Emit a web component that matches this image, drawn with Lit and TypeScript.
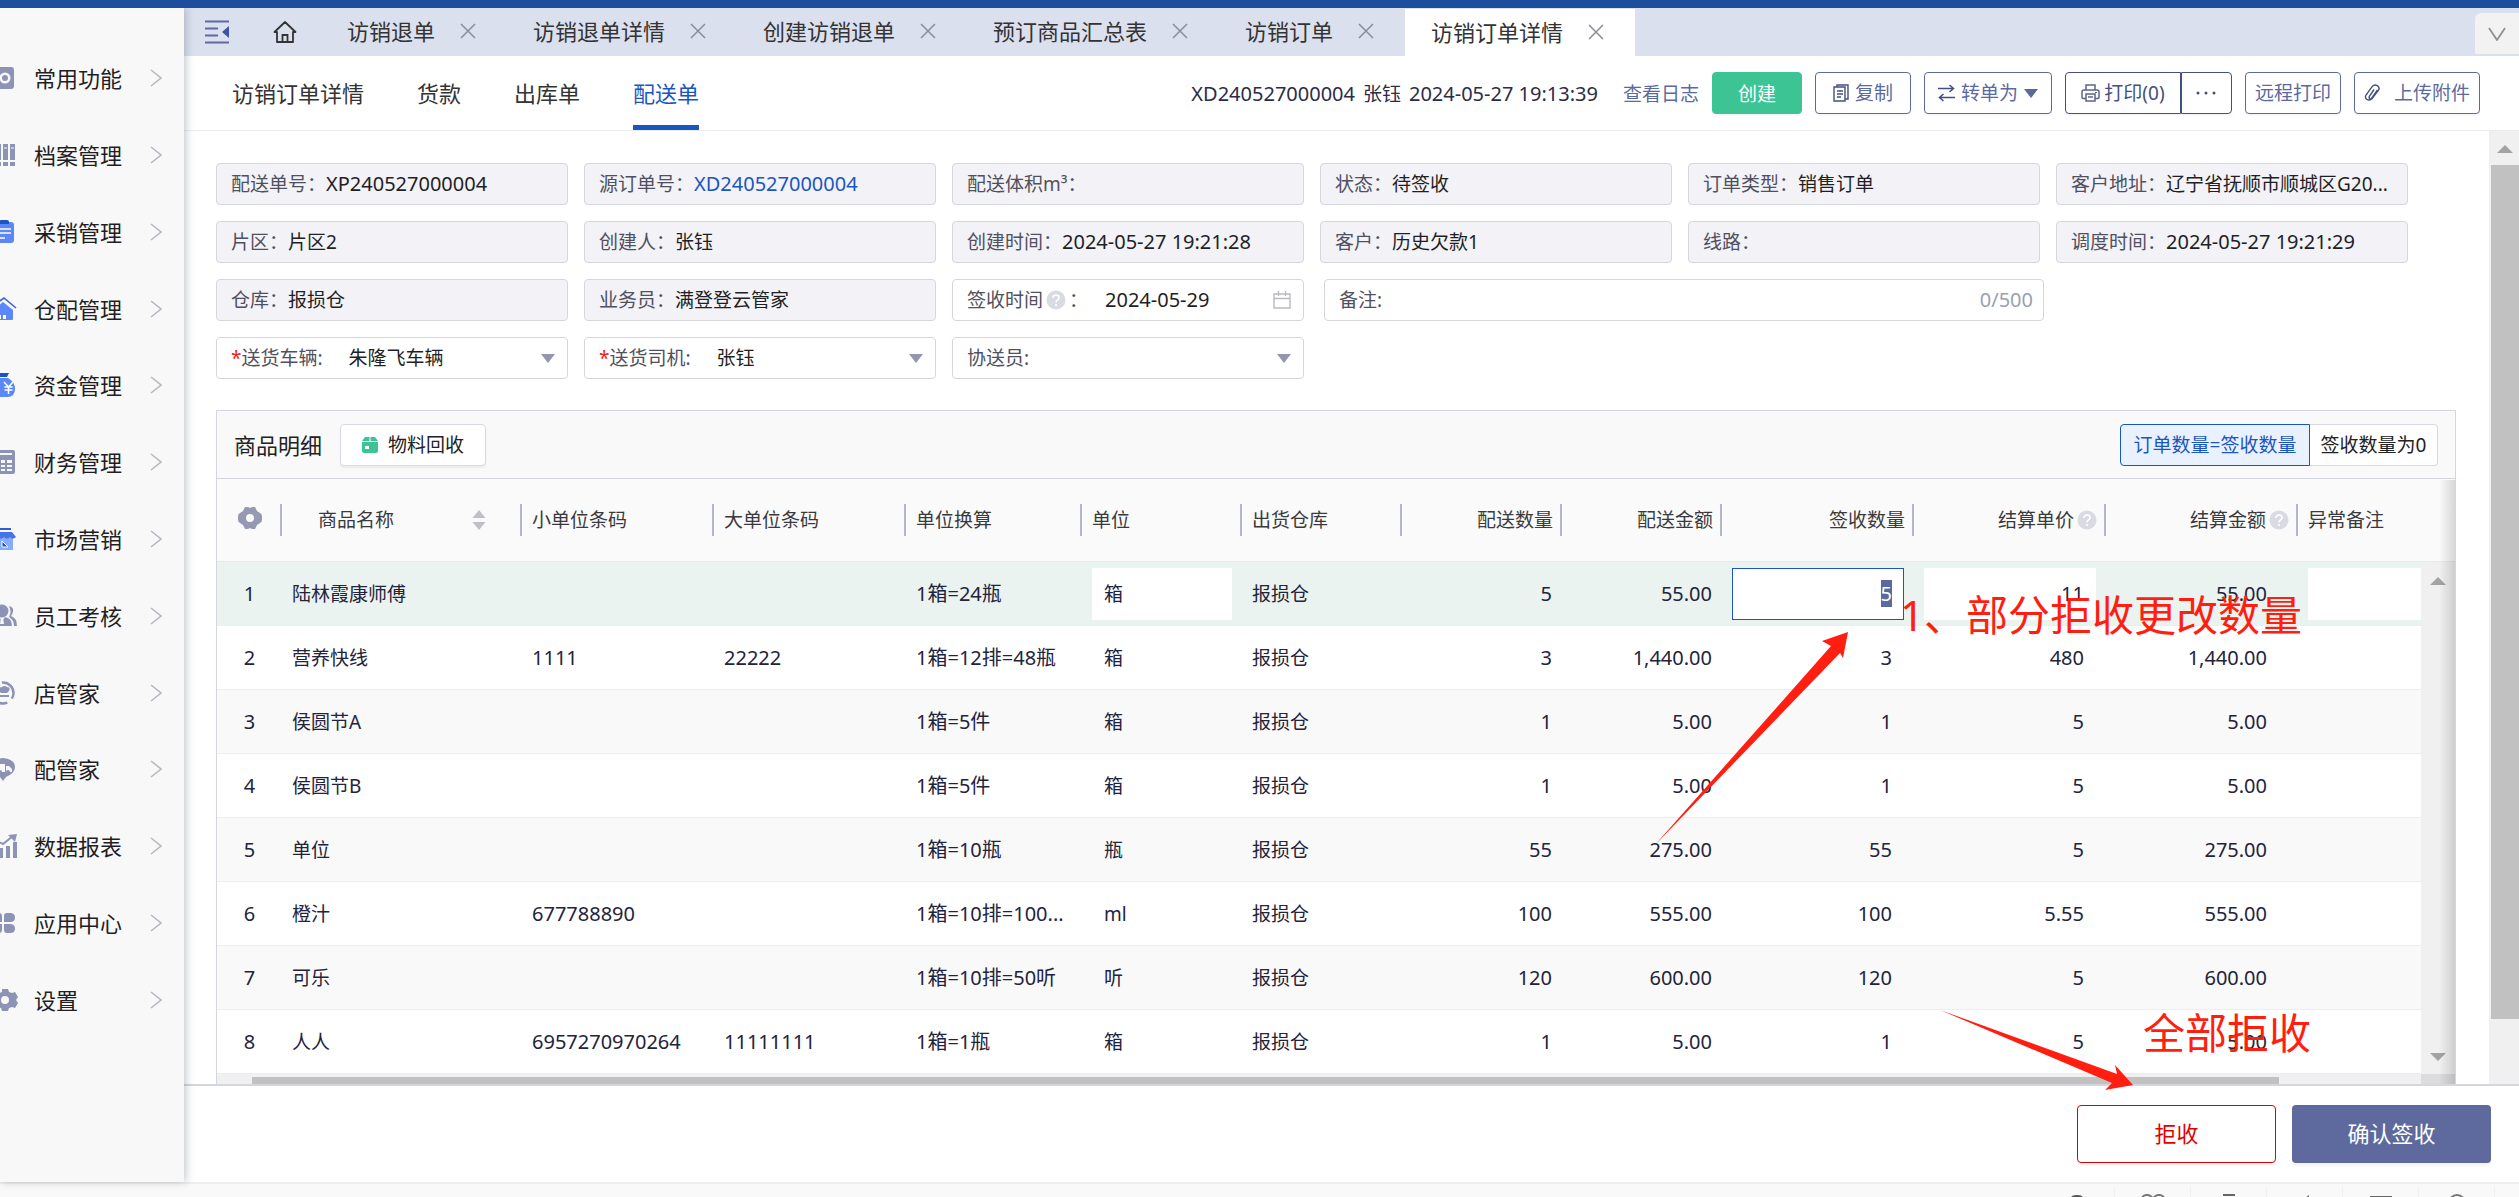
import { LitElement, html, css, svg, nothing } from "lit";
import { customElement, query } from "lit/decorators.js";
import { classMap } from "lit/directives/class-map.js";

type Tone = "gray" | "blue";

interface Row {
  name: string;
  small: string;
  large: string;
  conv: string;
  unit: string;
  qty: string;
  amount: string;
  signed: string;
  price: string;
  total: string;
}

const MENU: { label: string; tone: Tone; icon: unknown }[] = [
  {
    label: "常用功能",
    tone: "gray",
    icon: svg`<path fill-rule="evenodd" d="M3 1h18q3 0 3 3v16q0 3-3 3H7L0 18V4q0-3 3-3zM15 6.500a5.500 5.500 0 1 0 0 11 5.500 5.500 0 0 0 0-11zM15 9a3 3 0 1 1 0 6 3 3 0 0 1 0-6z"/>`,
  },
  {
    label: "档案管理",
    tone: "gray",
    icon: svg`<path d="M1 1h4v16H1zM1 19h4v4H1zM7 1h4v16H7zM7 19h4v4H7zM13 1h5v16h-5zM13 19h5v4h-5zM20 1h5v16h-5zM20 19h5v4h-5z"/><path d="M14 5h3M21 5h3M8 5h2" stroke="#f8f8f8"/>`,
  },
  {
    label: "采销管理",
    tone: "blue",
    icon: svg`<rect x="2" y="2" width="22" height="21" rx="3"/><path d="M9 4V2q0-2 2-2h6q2 0 2 2v2z" fill="#1b56c0"/><path d="M7 9h14M7 13h14M7 18h8" stroke="#fff" stroke-width="1.500"/>`,
  },
  {
    label: "仓配管理",
    tone: "blue",
    icon: svg`<path d="M3 13 13 5l10 8v9q0 1-1 1H4q-1 0-1-1z"/><path d="M0 11 14 1l12 10" fill="none" stroke="#3a63d8" stroke-width="1.600"/><path d="M8 18h3v4H8zM13 18h3v4h-3z" fill="#fff"/>`,
  },
  {
    label: "资金管理",
    tone: "blue",
    icon: svg`<path d="M7 0h12l-2 4H9z" fill="#1b56c0"/><path d="M8 5h10q7 4 7 11t-7 8H7q-6-2-6-8T8 5z"/><path d="m14 9 4.500 5L23 9M18.500 14v7M14.500 14h8M14.500 17h8" fill="none" stroke="#fff" stroke-width="1.500"/>`,
  },
  {
    label: "财务管理",
    tone: "gray",
    icon: svg`<rect x="1" y="0" width="24" height="24" rx="2"/><path d="M4 4h18" stroke="#f8f8f8" stroke-width="2"/><path d="M5 10h4v3H5zM11 10h4v3h-4zM17 10h5v3h-5zM5 15h4v2H5zM11 15h4v2h-4zM17 15h5v2h-5zM5 19h4v2H5zM11 19h4v2h-4zM17 19h5v2h-5z" fill="#f8f8f8"/>`,
  },
  {
    label: "市场营销",
    tone: "blue",
    icon: svg`<path d="M3 9h20v14H3z" fill="#86abff"/><path d="M3 1h18v2H3z" fill="#2f5fd8"/><path d="M3 5h19l4 5q-3 3-6 0-3 3-6 0-3 3-6 0-3 3-6 0z" fill="#4674e8"/><path d="m12 14 6 6h-6z" fill="#1b56c0" stroke="#fff"/>`,
  },
  {
    label: "员工考核",
    tone: "gray",
    icon: svg`<circle cx="12" cy="7" r="6.500"/><path d="M1 22q1-8 8-9l3 4 3-4q7 1 7 9z"/><path d="M19 2q5 1 4 6-1 3-2 4 6 2 6 10h-3q0-6-5-9 3-5 0-11z"/><path d="M11 14h2l1 6h-4z" fill="#f8f8f8"/>`,
  },
  {
    label: "店管家",
    tone: "gray",
    icon: svg`<circle cx="13" cy="12" r="10.500" fill="none" stroke="currentColor" stroke-width="2.500" stroke-dasharray="24 6 30 6" stroke-dashoffset="18"/><path d="M9 10q-1-4 3-4 2-2 5 0 4 0 2 4l-2 2h-6zM9 14h10v2H9z"/>`,
  },
  {
    label: "配管家",
    tone: "gray",
    icon: svg`<path d="M13 1q12 1 12 9 0 6-9 10l-3 4-3-4q-9-4-9-10 0-8 12-9z"/><path d="M5 7h10v8H5zM16 9h3l3 3v3h-6z" fill="#f8f8f8"/><circle cx="10" cy="15" r="2"/><circle cx="18" cy="15" r="2"/>`,
  },
  {
    label: "数据报表",
    tone: "gray",
    icon: svg`<path d="M2 17h4v7H2zM9 14h4v10H9zM16 12h4v12h-4zM23 8h4v16h-4z"/><path d="m1 12 6-5 6 3 10-8" fill="none" stroke="currentColor" stroke-width="2"/><path d="m18 1 9-1-2 8z"/>`,
  },
  {
    label: "应用中心",
    tone: "gray",
    icon: svg`<path d="M5 2h4q3 0 3 3v6H6q-4 0-4-4.500T5 2zM20 2q5 0 5 4.500T20 11h-6V5q0-3 3-3zM5 13h7v6q0 3-3 3H6q-4 0-4-4.500T5 13zM14 13h6q5 0 5 4.500T20 22h-3q-3 0-3-3z"/>`,
  },
  {
    label: "设置",
    tone: "gray",
    icon: svg`<path fill-rule="evenodd" d="M12 1h6l1 3 3 1 3-1 3 5-2 3 2 3-3 5-3-1-3 1-1 3h-6l-1-3-3-1-3 1-2-5 2-3-2-3 3-5 3 1 3-1zM15 8a4 4 0 1 0 0 8 4 4 0 0 0 0-8z"/>`,
  },
];

const TABS = ["访销退单", "访销退单详情", "创建访销退单", "预订商品汇总表", "访销订单", "访销订单详情"];

const INFO: { label: string; value: string; num?: boolean; link?: boolean }[] = [
  { label: "配送单号", value: "XP240527000004", num: true },
  { label: "源订单号", value: "XD240527000004", num: true, link: true },
  { label: "配送体积m³", value: "" },
  { label: "状态", value: "待签收" },
  { label: "订单类型", value: "销售订单" },
  { label: "客户地址", value: "辽宁省抚顺市顺城区G20..." },
  { label: "片区", value: "片区2" },
  { label: "创建人", value: "张钰" },
  { label: "创建时间", value: "2024-05-27 19:21:28", num: true },
  { label: "客户", value: "历史欠款1" },
  { label: "线路", value: "" },
  { label: "调度时间", value: "2024-05-27 19:21:29", num: true },
  { label: "仓库", value: "报损仓" },
  { label: "业务员", value: "满登登云管家" },
];

const row = (...v: string[]): Row => ({
  name: v[0], small: v[1], large: v[2], conv: v[3], unit: v[4],
  qty: v[5], amount: v[6], signed: v[7], price: v[8], total: v[9],
});

const ROWS: Row[] = [
  row("陆林霞康师傅", "", "", "1箱=24瓶", "箱", "5", "55.00", "5", "11", "55.00"),
  row("营养快线", "1111", "22222", "1箱=12排=48瓶", "箱", "3", "1,440.00", "3", "480", "1,440.00"),
  row("侯圆节A", "", "", "1箱=5件", "箱", "1", "5.00", "1", "5", "5.00"),
  row("侯圆节B", "", "", "1箱=5件", "箱", "1", "5.00", "1", "5", "5.00"),
  row("单位", "", "", "1箱=10瓶", "瓶", "55", "275.00", "55", "5", "275.00"),
  row("橙汁", "677788890", "", "1箱=10排=100...", "ml", "100", "555.00", "100", "5.55", "555.00"),
  row("可乐", "", "", "1箱=10排=50听", "听", "120", "600.00", "120", "5", "600.00"),
  row("人人", "6957270970264", "11111111", "1箱=1瓶", "箱", "1", "5.00", "1", "5", "5.00"),
];

const base = css`
  * {
    box-sizing: border-box;
  }
  button,
  input,
  select {
    font: inherit;
    color: inherit;
    margin: 0;
    padding: 0;
    border: 0;
    border-radius: 0;
    background: none;
    outline: none;
    appearance: none;
    min-width: 0;
  }
  a {
    color: inherit;
    text-decoration: none;
  }
  svg {
    display: block;
    flex: none;
  }
`;

const help = html`<svg width="20" height="20" viewBox="0 0 20 20" aria-hidden="true">
  <circle cx="10" cy="10" r="9.500" fill="#d9dbe3" />
  <path d="M7 8q0-3 3-3t3 2.600q0 1.400-1.500 2.400T10 12.500" fill="none" stroke="#fff" stroke-width="1.600" />
  <circle cx="10" cy="15" r="1.100" fill="#fff" />
</svg>`;

const caret = (color: string) => html`<svg width="14" height="9" viewBox="0 0 14 9" aria-hidden="true">
  <path d="M0 0h14L7 9z" fill=${color} />
</svg>`;

@customElement("side-menu")
class SideMenu extends LitElement {
  static styles = [
    base,
    css`
      :host {
        display: block;
        position: relative;
        z-index: 2;
        flex: none;
        width: 184px;
        background: #f8f8f8;
        box-shadow: 2px 0 8px rgba(60, 75, 90, 0.3);
      }
      .menu {
        display: flex;
        flex-direction: column;
        height: 100%;
        padding: 32px 0 144px;
      }
      .item {
        flex: 1;
        display: flex;
        align-items: center;
        padding-right: 22px;
        color: #1e1e24;
        font-size: 22px;
        line-height: 32px;
      }
      .icon {
        margin-left: -10px;
        margin-right: 16px;
        overflow: visible;
      }
      .gray {
        fill: #8d93b4;
        color: #8d93b4;
      }
      .blue {
        fill: #5b87f8;
      }
      .label {
        flex: 1;
      }
    `,
  ];

  render() {
    return html`<nav class="menu">
      ${MENU.map(
        (m) => html`<a class="item" href="#">
          <svg class="icon ${m.tone}" width="28" height="24" viewBox="0 0 28 24" aria-hidden="true">${m.icon}</svg>
          <span class="label">${m.label}</span>
          <svg width="12" height="18" viewBox="0 0 12 18" aria-hidden="true">
            <path d="m1 1 10 8L1 17" fill="none" stroke="#b4b7c0" stroke-width="1.500" />
          </svg>
        </a>`
      )}
    </nav>`;
  }
}

@customElement("tab-strip")
class TabStrip extends LitElement {
  static styles = [
    base,
    css`
      :host {
        display: flex;
        flex: none;
        height: 48px;
        padding-left: 20px;
        background: #dbe0ee;
        color: #333;
        font-size: 22px;
        line-height: 32px;
      }
      .tool {
        display: flex;
        align-items: center;
        justify-content: center;
      }
      .fold {
        width: 26px;
      }
      .home {
        width: 26px;
        margin: 0 23px 0 42px;
      }
      .tab {
        display: flex;
        align-items: center;
        gap: 25px;
        padding: 0 31px 2px 26px;
        white-space: nowrap;
      }
      .active {
        margin-top: 1px;
        background: #fff;
      }
      .more {
        width: 44px;
        margin: 5px 0 2px auto;
        border-radius: 6px 0 0 0;
        background: #f2f2f2;
      }
    `,
  ];

  render() {
    return html`
      <button class="tool fold" aria-label="收起菜单">
        <svg width="26" height="24" viewBox="0 0 26 24" aria-hidden="true">
          <path d="M1 1.500h24M1 8.500h13M1 15.500h13M1 22.500h24" stroke="#5d6aa0" stroke-width="2" />
          <path d="M25 6v12l-7-6z" fill="#3d55a5" />
        </svg>
      </button>
      <button class="tool home" aria-label="首页">
        <svg width="24" height="24" viewBox="0 0 24 24" aria-hidden="true">
          <path d="M1.500 12 12 2l10.500 10H20v10H4V12z" fill="none" stroke="#333" stroke-width="1.800" stroke-linejoin="round" />
          <path d="M9.500 22v-7h5v7" fill="none" stroke="#333" stroke-width="1.800" />
        </svg>
      </button>
      ${TABS.map(
        (t, i) => html`<div class=${classMap({ tab: true, active: i === TABS.length - 1 })}>
          <a href="#">${t}</a>
          <button aria-label="关闭">
            <svg width="16" height="16" viewBox="0 0 16 16" aria-hidden="true">
              <path d="m1 1 14 14M15 1 1 15" stroke="#8a8d96" stroke-width="1.500" />
            </svg>
          </button>
        </div>`
      )}
      <button class="tool more" aria-label="更多标签">
        <svg width="18" height="14" viewBox="0 0 18 14" aria-hidden="true">
          <path d="m1 1 8 12 8-12" fill="none" stroke="#8f8f94" stroke-width="1.800" />
        </svg>
      </button>
    `;
  }
}

@customElement("order-header")
class OrderHeader extends LitElement {
  static styles = [
    base,
    css`
      :host {
        display: flex;
        flex: none;
        justify-content: space-between;
        height: 75px;
        padding: 0 39px 0 48px;
        border-bottom: 1px solid #e9ebee;
        white-space: nowrap;
      }
      .views {
        display: flex;
        gap: 53px;
        font-size: 22px;
        line-height: 32px;
        color: #333;
      }
      .view {
        padding-top: 21px;
      }
      .current {
        border-bottom: 5px solid #1b56c0;
        color: #1b56c0;
      }
      .actions {
        display: flex;
        align-items: center;
        gap: 13px;
        font-size: 19px;
        line-height: 28px;
        color: #5b6a9e;
      }
      .stamp {
        display: flex;
        gap: 8px;
        margin-right: 12px;
        color: #2c2c48;
      }
      .stamp,
      .log {
        padding-top: 2px;
      }
      .num {
        font-size: 20px;
      }
      .btn {
        display: flex;
        align-items: center;
        justify-content: center;
        height: 42px;
        border: 1px solid #5b6a9e;
        border-radius: 4px;
        gap: 6px;
        padding: 0 9px;
        box-shadow: 0 2px 1px rgba(0, 0, 0, 0.03);
      }
      .create {
        width: 90px;
        padding-top: 2px;
        border-color: #3cc495;
        background: #3cc495;
        color: #fff;
      }
      .copy {
        width: 96px;
      }
      .turn {
        width: 128px;
      }
      .group {
        display: flex;
        color: #434f80;
      }
      .print {
        width: 116px;
        gap: 4px;
        border-color: #434f80;
        border-radius: 4px 0 0 4px;
      }
      .dots {
        width: 51px;
        border-color: #434f80;
        border-radius: 0 4px 4px 0;
      }
      .upload {
        gap: 14px;
      }
    `,
  ];

  render() {
    return html`
      <nav class="views">
        <a class="view" href="#">访销订单详情</a>
        <a class="view" href="#">货款</a>
        <a class="view" href="#">出库单</a>
        <a class="view current" href="#">配送单</a>
      </nav>
      <div class="actions">
        <div class="stamp">
          <span class="num">XD240527000004</span><span>张钰</span><span class="num">2024-05-27 19:13:39</span>
        </div>
        <a class="log" href="#">查看日志</a>
        <button class="btn create">创建</button>
        <button class="btn copy">
          <svg width="16" height="18" viewBox="0 0 16 18" aria-hidden="true">
            <path d="M4 3V1h11v14h-3M1 3h11v14H1zM4 7h6M4 10h6M4 13h4" fill="none" stroke="#434f80" stroke-width="1.400" />
          </svg>
          复制
        </button>
        <button class="btn turn">
          <svg width="17" height="18" viewBox="0 0 17 18" aria-hidden="true">
            <path d="M0 4.500h15M11.500 1l4 3.500-4 3.500M17 13.500H2M5.500 10l-4 3.500 4 3.500" fill="none" stroke="#434f80" stroke-width="1.500" />
          </svg>
          转单为 ${caret("#5b6a9e")}
        </button>
        <div class="group">
          <button class="btn print">
            <svg width="19" height="18" viewBox="0 0 19 18" aria-hidden="true">
              <path d="M5 6V1h9v5M4.500 14.500H2q-1 0-1-1V8q0-2 2-2h13q2 0 2 2v5.500q0 1-1 1h-2.500M5 10h9v7H5zM7 13h5" fill="none" stroke="#5b6588" stroke-width="1.500" />
              <path d="M14 8.500h2" stroke="#5b6588" />
            </svg>
            <span>打印(0)</span>
          </button>
          <button class="btn dots" aria-label="更多">
            <svg width="20" height="4" viewBox="0 0 20 4" aria-hidden="true">
              <circle cx="2" cy="2" r="1.500" fill="#434f80" />
              <circle cx="10" cy="2" r="1.500" fill="#434f80" />
              <circle cx="18" cy="2" r="1.500" fill="#434f80" />
            </svg>
          </button>
        </div>
        <button class="btn">远程打印</button>
        <button class="btn upload">
          <svg width="16" height="18" viewBox="0 0 16 18" aria-hidden="true">
            <path d="m13.500 6-6 8.500q-2 2.500-4.500 1t-1-4.500l6.500-8.800q2-2.200 4.800-.6t1.200 4.600l-6.200 8.200q-1.300 1.200-2.500.3t-.3-2.500L10 5.500" fill="none" stroke="#434f80" stroke-width="1.400" />
          </svg>
          上传附件
        </button>
      </div>
    `;
  }
}

@customElement("delivery-form")
class DeliveryForm extends LitElement {
  static styles = [
    base,
    css`
      :host {
        display: grid;
        grid-template-columns: repeat(6, minmax(0, 1fr));
        gap: 16px;
        padding-right: 48px;
        font-size: 19px;
        line-height: 28px;
        color: #1f1f24;
        white-space: nowrap;
      }
      .field {
        display: flex;
        align-items: center;
        height: 42px;
        padding: 0 12px 0 14px;
        border: 1px solid #d5d7e0;
        border-radius: 4px;
        background: #f2f2f7;
      }
      .open {
        background: #fff;
      }
      .label {
        color: #50505f;
        flex: none;
      }
      .num {
        font-size: 20px;
      }
      .link {
        color: #1b56c0;
      }
      .req {
        color: #f02020;
      }
      .control {
        flex: 1;
      }
      .pick {
        margin-left: 26px;
      }
      .hint {
        display: flex;
        align-items: center;
        gap: 3px;
      }
      .date {
        margin-left: 17px;
      }
      .remark {
        grid-column: span 2;
        margin: 0 -4px 0 4px;
        padding-right: 10px;
      }
      .count {
        color: #9c9fb0;
        font-size: 20px;
      }
    `,
  ];

  private pick(id: string, label: string, value: string, required: boolean) {
    return html`<div class="field open">
      <label class="label" for=${id}>${required ? html`<span class="req">*</span>` : nothing}${label}:</label>
      <select id=${id} class="control pick">
        <option>${value}</option>
      </select>
      ${caret("#9296ae")}
    </div>`;
  }

  render() {
    return html`
      ${INFO.map(
        (f) => html`<div class="field">
          <span class="label">${f.label}：</span>
          ${f.link
            ? html`<a class="num link" href="#">${f.value}</a>`
            : html`<span class=${classMap({ num: !!f.num })}>${f.value}</span>`}
        </div>`
      )}
      <div class="field open">
        <label class="label hint" for="sign-date">签收时间 ${help} ：</label>
        <input id="sign-date" class="control date num" value="2024-05-29" />
        <svg width="18" height="18" viewBox="0 0 18 18" aria-hidden="true">
          <path d="M1 3h16v14H1zM1 7.500h16M5.500 0v5M12.500 0v5" fill="none" stroke="#b9bbc2" stroke-width="1.400" />
        </svg>
      </div>
      <div class="field open remark">
        <label class="label" for="remark">备注:</label>
        <input id="remark" class="control" />
        <span class="count">0/500</span>
      </div>
      <span></span>
      ${this.pick("truck", "送货车辆", "朱隆飞车辆", true)} ${this.pick("driver", "送货司机", "张钰", true)}
      ${this.pick("helper", "协送员", "", false)}
    `;
  }
}

@customElement("goods-panel")
class GoodsPanel extends LitElement {
  @query(".focus") private focusInput!: HTMLInputElement;

  static styles = [
    base,
    css`
      :host {
        display: block;
        position: relative;
        border: 1px solid #d3d6e0;
        color: #23233c;
        font-size: 19px;
        line-height: 28px;
        white-space: nowrap;
      }
      .bar {
        display: flex;
        align-items: center;
        height: 68px;
        padding: 0 17px;
        border-bottom: 1px solid #d3d6e0;
        background: #f9f9f9;
      }
      .title {
        margin: 0 18px 0 0;
        font-size: 22px;
        font-weight: 400;
        line-height: 32px;
        color: #222;
      }
      .btn {
        display: flex;
        align-items: center;
        justify-content: center;
        gap: 10px;
        height: 42px;
        border: 1px solid #d8dae2;
        border-radius: 4px;
        background: #fff;
        color: #222;
      }
      .recycle {
        width: 146px;
        box-shadow: 0 2px 2px rgba(0, 0, 0, 0.05);
      }
      .split {
        display: flex;
        margin-left: auto;
      }
      .on {
        width: 190px;
        border-color: #1b56c0;
        border-radius: 4px 0 0 4px;
        background: #eaf1fe;
        color: #1b56c0;
      }
      .off {
        width: 128px;
        border-left: 0;
        border-radius: 0 4px 4px 0;
      }
      .table {
        width: 100%;
        table-layout: fixed;
        border-collapse: separate;
        border-spacing: 0;
      }
      .w65 {
        width: 65px;
      }
      .w160 {
        width: 160px;
      }
      .w176 {
        width: 176px;
      }
      .w192 {
        width: 192px;
      }
      .w240 {
        width: 240px;
      }
      th {
        height: 83px;
        padding: 0 9px 0 10px;
        border-bottom: 1px solid #e6e7ea;
        background: #fafafa linear-gradient(#b4b7ca, #b4b7ca) right center / 2px 32px no-repeat;
        font-weight: 400;
        color: #3a3a3e;
        text-align: left;
      }
      th:last-child {
        background: #fafafa;
      }
      td {
        height: 64px;
        padding: 0 10px;
        border-bottom: 1px solid #ededf0;
        overflow: hidden;
      }
      .right {
        text-align: right;
      }
      .inline {
        display: flex;
        align-items: center;
        justify-content: flex-end;
        gap: 3px;
      }
      .sort {
        display: flex;
        align-items: center;
        justify-content: space-between;
        padding: 0 27px 0 26px;
      }
      .idx {
        padding: 0;
        text-align: center;
      }
      .gear {
        margin: 0 auto 4px;
      }
      .num {
        font-size: 20px;
      }
      .total {
        padding-right: 31px;
      }
      tbody tr:nth-child(odd) {
        background: #f9f9f9;
      }
      tbody tr.picked:first-child {
        background: #eaf3f0;
      }
      .cell {
        display: block;
        width: 100%;
        height: 52px;
        padding: 0 12px;
      }
      .picked .cell {
        background: #fff;
      }
      .picked .focus {
        border: 1px solid #1b56c0;
        padding: 0 11px;
      }
      .focus::selection {
        background: #5b6a9e;
        color: #fff;
      }
      .vbar {
        position: absolute;
        top: 151px;
        right: 0;
        bottom: 30px;
        width: 34px;
        display: flex;
        flex-direction: column;
        justify-content: space-between;
        align-items: center;
        padding: 15px 0 13px;
        background: #f0f0f0;
      }
      .shade {
        position: absolute;
        top: 69px;
        right: 0;
        bottom: 0;
        width: 16px;
        background: linear-gradient(to right, transparent, rgba(0, 0, 0, 0.14));
      }
      .hbar {
        display: flex;
        height: 30px;
        padding: 3px 0 3px 35px;
        background: linear-gradient(#dcdcdc, #dcdcdc) right / 34px 100% no-repeat #f0f0f0;
      }
      .thumb {
        width: 92%;
        background: #c1c1c1;
      }
    `,
  ];

  firstUpdated() {
    this.focusInput.focus({ preventScroll: true });
    this.focusInput.select();
  }

  render() {
    return html`
      <div class="bar">
        <h2 class="title">商品明细</h2>
        <button class="btn recycle">
          <svg width="16" height="16" viewBox="0 0 16 16" aria-hidden="true">
            <path d="M3 0h4.500v4H0zM8.500 0H13l3 4H8.500zM0 5h16v9q0 2-2 2H2q-2 0-2-2z" fill="#3cc495" />
            <path d="M3 9h4v3H3z" fill="#fff" />
          </svg>
          物料回收
        </button>
        <div class="split">
          <button class="btn on">订单数量=签收数量</button>
          <button class="btn off">签收数量为0</button>
        </div>
      </div>
      <table class="table">
        <colgroup>
          <col class="w65" />
          <col class="w240" />
          <col class="w192" />
          <col class="w192" />
          <col class="w176" />
          <col class="w160" />
          <col class="w160" />
          <col class="w160" />
          <col class="w160" />
          <col class="w192" />
          <col class="w192" />
          <col class="w192" />
          <col />
        </colgroup>
        <thead>
          <tr>
            <th class="idx">
              <svg class="gear" width="24" height="22" viewBox="0 0 24 22" aria-label="列设置">
                <path fill-rule="evenodd" fill="#9599b2" d="M7 0h3l2 1 2-1h3l2 4 3 2q2 1 2 3v4q0 2-2 3l-3 2-2 4h-3l-2-1-2 1H7l-2-4-3-2q-2-1-2-3V9q0-2 2-3l3-2zM12 7a4 4 0 1 0 0 8 4 4 0 0 0 0-8z" />
              </svg>
            </th>
            <th>
              <div class="sort">
                商品名称
                <svg width="14" height="20" viewBox="0 0 14 20" aria-hidden="true">
                  <path d="M7 0l6.500 8H.5zM7 20l6.500-8H.5z" fill="#bfc0c6" />
                </svg>
              </div>
            </th>
            <th>小单位条码</th>
            <th>大单位条码</th>
            <th>单位换算</th>
            <th>单位</th>
            <th>出货仓库</th>
            <th class="right">配送数量</th>
            <th class="right">配送金额</th>
            <th class="right">签收数量</th>
            <th><div class="inline">结算单价${help}</div></th>
            <th><div class="inline">结算金额${help}</div></th>
            <th>异常备注</th>
          </tr>
        </thead>
        <tbody>
          ${ROWS.map(
            (r, i) => html`<tr class=${classMap({ picked: i === 0 })}>
              <td class="idx num">${i + 1}</td>
              <td>${r.name}</td>
              <td class="num">${r.small}</td>
              <td class="num">${r.large}</td>
              <td class="num">${r.conv}</td>
              <td>
                <select class="cell" aria-label="单位">
                  <option>${r.unit}</option>
                </select>
              </td>
              <td>报损仓</td>
              <td class="right num">${r.qty}</td>
              <td class="right num">${r.amount}</td>
              <td>
                <input class=${classMap({ cell: true, right: true, num: true, focus: i === 0 })} aria-label="签收数量" .value=${r.signed} />
              </td>
              <td><input class="cell right num" aria-label="结算单价" .value=${r.price} /></td>
              <td class="right num total">${r.total}</td>
              <td><input class="cell" aria-label="异常备注" /></td>
            </tr>`
          )}
        </tbody>
      </table>
      <div class="hbar"><div class="thumb"></div></div>
      <div class="vbar">
        <svg width="16" height="8" viewBox="0 0 16 8" aria-hidden="true"><path d="M8 0l8 8H0z" fill="#a3a3a3" /></svg>
        <svg width="16" height="8" viewBox="0 0 16 8" aria-hidden="true"><path d="M8 8l8-8H0z" fill="#a3a3a3" /></svg>
      </div>
      <div class="shade"></div>
    `;
  }
}

@customElement("app-root")
class AppRoot extends LitElement {
  static styles = [
    base,
    css`
      :host {
        display: flex;
        flex-direction: column;
        position: relative;
        height: 100vh;
        overflow: hidden;
        border-top: 8px solid #1d4e9e;
        box-sizing: border-box;
        background: #fff;
        font-family: "Noto Sans", "Noto Sans CJK SC", sans-serif;
      }
      .body {
        flex: 1;
        display: flex;
        min-height: 0;
      }
      .main {
        flex: 1;
        display: flex;
        flex-direction: column;
        min-width: 0;
      }
      .scroller {
        flex: 1;
        display: flex;
        min-height: 0;
      }
      .content {
        flex: 1;
        display: flex;
        flex-direction: column;
        gap: 31px;
        min-width: 0;
        padding: 32px 33px 0 32px;
        overflow: hidden;
      }
      .content > * {
        flex: none;
      }
      .track {
        display: flex;
        flex-direction: column;
        align-items: center;
        gap: 12px;
        width: 30px;
        padding: 14px 0 0 2px;
        background: #f0f0f0;
      }
      .thumb {
        width: 100%;
        height: 91%;
        background: #c1c1c1;
      }
      .footer {
        display: flex;
        flex: none;
        justify-content: flex-end;
        gap: 16px;
        height: 98px;
        padding: 19px 28px 0;
        border-top: 2px solid #d3d6de;
        font-size: 22px;
        line-height: 32px;
      }
      .big {
        width: 199px;
        height: 58px;
        padding-bottom: 2px;
        border-radius: 4px;
        box-shadow: 0 3px 1px rgba(0, 0, 0, 0.04);
      }
      .reject {
        border: 1px solid #e00000;
        color: #e00000;
      }
      .confirm {
        background: #5e6a9e;
        color: #fff;
      }
      .status {
        display: flex;
        flex: none;
        justify-content: flex-end;
        height: 15px;
        padding: 2px 24px 0 0;
        border-top: 2px solid #eeeeee;
        background: #f9f9f9;
        overflow: hidden;
      }
      .slot {
        display: flex;
        justify-content: center;
        width: 76px;
        padding-top: 8px;
        border-right: 1px solid #f1f1f3;
      }
      .notes {
        position: absolute;
        inset: 0;
        z-index: 3;
        pointer-events: none;
        color: #ff1e0f;
        font-size: 42px;
        line-height: 60px;
        white-space: nowrap;
      }
      .arrows {
        position: absolute;
        left: 0;
        top: -8px;
        fill: #ff1e0f;
      }
      .note-a {
        position: absolute;
        left: 1900px;
        top: 577px;
      }
      .note-b {
        position: absolute;
        left: 2143px;
        top: 995px;
      }
    `,
  ];

  private slotIcons = [
    svg`<path d="M8 4q0-3 6-3t6 3z" fill="#555"/>`,
    svg`<path d="M2 8a6 6 0 0 1 12-2 6 6 0 0 1 12 2" fill="none" stroke="#777" stroke-width="2"/>`,
    svg`<path d="M8 0h12v2H8z" fill="#666"/>`,
    svg`<path d="M14 4l4-3v3z" fill="#666"/>`,
    svg`<path d="M3 2h22v2H3z" fill="#666"/>`,
    svg`<circle cx="14" cy="9" r="8" fill="none" stroke="#777" stroke-width="2"/>`,
  ];

  render() {
    return html`
      <div class="body">
        <side-menu></side-menu>
        <div class="main">
          <tab-strip></tab-strip>
          <order-header></order-header>
          <div class="scroller">
            <div class="content">
              <delivery-form></delivery-form>
              <goods-panel></goods-panel>
            </div>
            <div class="track">
              <svg width="16" height="8" viewBox="0 0 16 8" aria-hidden="true"><path d="M8 0l8 8H0z" fill="#a3a3a3" /></svg>
              <div class="thumb"></div>
            </div>
          </div>
          <footer class="footer">
            <button class="big reject">拒收</button>
            <button class="big confirm">确认签收</button>
          </footer>
        </div>
      </div>
      <div class="status">
        ${this.slotIcons.map(
          (s) => html`<div class="slot"><svg width="28" height="10" viewBox="0 0 28 10" aria-hidden="true">${s}</svg></div>`
        )}
      </div>
      <div class="notes">
        <svg class="arrows" width="2519" height="1197" viewBox="0 0 2519 1197" aria-hidden="true">
          <path d="M1654 846 1831 646 1822 641 1848 632 1843 658 1840 653z" />
          <path d="M1940 1010 2117 1074 2115 1065 2133 1085 2105 1090 2112 1083z" />
        </svg>
        <span class="note-a">1、部分拒收更改数量</span>
        <span class="note-b">全部拒收</span>
      </div>
    `;
  }
}
